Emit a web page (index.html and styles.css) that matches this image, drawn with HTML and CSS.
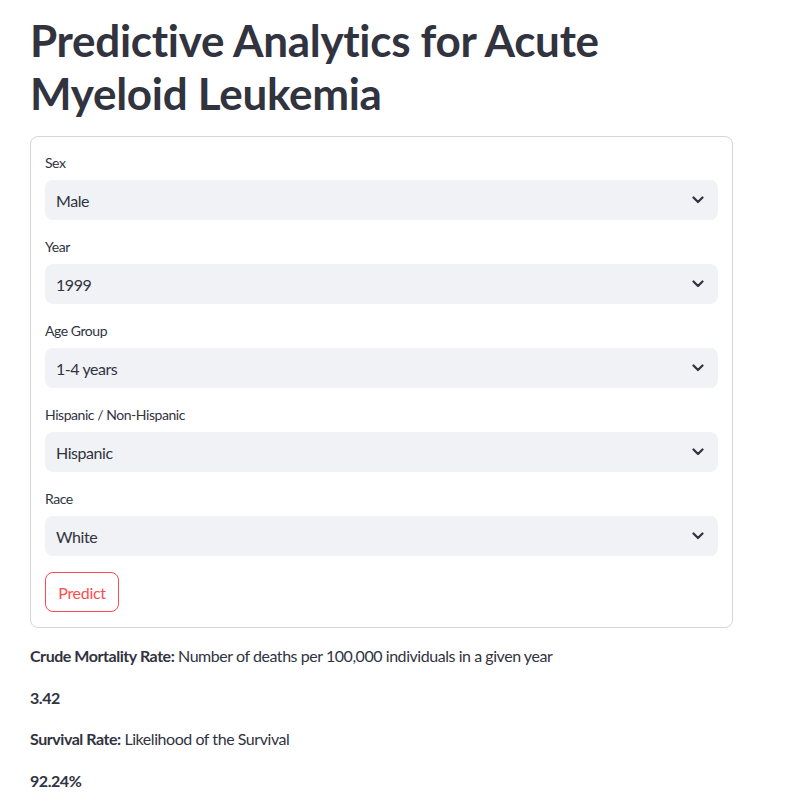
FILE: index.html
```html
<!DOCTYPE html>
<html lang="en">
<head>
<meta charset="utf-8">
<title>Predictive Analytics for Acute Myeloid Leukemia</title>
<link rel="stylesheet" href="styles.css">
</head>
<body>
<main class="main">
  <h1 class="title">Predictive Analytics for Acute Myeloid Leukemia</h1>
  <form class="form">
    <div class="field">
      <label class="label">Sex</label>
      <div class="select"><span>Male</span><svg class="chev" viewBox="0 0 12 8" width="12" height="8"><path d="M1.5 1.5 L6 6 L10.5 1.5" fill="none" stroke="#31333f" stroke-width="2.2" stroke-linecap="round" stroke-linejoin="round"/></svg></div>
    </div>
    <div class="field">
      <label class="label">Year</label>
      <div class="select"><span>1999</span><svg class="chev" viewBox="0 0 12 8" width="12" height="8"><path d="M1.5 1.5 L6 6 L10.5 1.5" fill="none" stroke="#31333f" stroke-width="2.2" stroke-linecap="round" stroke-linejoin="round"/></svg></div>
    </div>
    <div class="field">
      <label class="label">Age Group</label>
      <div class="select"><span>1-4 years</span><svg class="chev" viewBox="0 0 12 8" width="12" height="8"><path d="M1.5 1.5 L6 6 L10.5 1.5" fill="none" stroke="#31333f" stroke-width="2.2" stroke-linecap="round" stroke-linejoin="round"/></svg></div>
    </div>
    <div class="field">
      <label class="label">Hispanic / Non-Hispanic</label>
      <div class="select"><span>Hispanic</span><svg class="chev" viewBox="0 0 12 8" width="12" height="8"><path d="M1.5 1.5 L6 6 L10.5 1.5" fill="none" stroke="#31333f" stroke-width="2.2" stroke-linecap="round" stroke-linejoin="round"/></svg></div>
    </div>
    <div class="field">
      <label class="label">Race</label>
      <div class="select"><span>White</span><svg class="chev" viewBox="0 0 12 8" width="12" height="8"><path d="M1.5 1.5 L6 6 L10.5 1.5" fill="none" stroke="#31333f" stroke-width="2.2" stroke-linecap="round" stroke-linejoin="round"/></svg></div>
    </div>
    <button type="button" class="btn">Predict</button>
  </form>
  <p class="para"><strong>Crude Mortality Rate:</strong> Number of deaths per 100,000 individuals in a given year</p>
  <p class="para"><strong>3.42</strong></p>
  <p class="para"><strong>Survival Rate:</strong> Likelihood of the Survival</p>
  <p class="para"><strong>92.24%</strong></p>
</main>
</body>
</html>
```

FILE: styles.css
```css
* { box-sizing: border-box; }
html, body { margin: 0; padding: 0; background: #ffffff; }
body {
  font-family: "Lato", "Noto Sans", "Liberation Sans", sans-serif;
  color: #31333f;
  font-size: 16px;
  letter-spacing: -0.45px;
}
.main {
  width: 703px;
  margin-left: 30px;
  padding-top: 14px;
  display: flex;
  flex-direction: column;
}
.title {
  margin: 0 0 16px 0;
  font-size: 44px;
  line-height: 53px;
  font-weight: 700;
  letter-spacing: -0.3px;
  color: #31333f;
}
.form {
  border: 1px solid rgba(49, 51, 63, 0.2);
  border-radius: 8px;
  padding: 15px 14px;
  display: flex;
  flex-direction: column;
  gap: 16px;
  margin: 0 0 15px 0;
}
.field { display: flex; flex-direction: column; }
.label {
  font-size: 14px;
  line-height: 22px;
  min-height: 22px;
  margin-bottom: 6px;
  color: #31333f;
}
.select {
  height: 40px;
  background: #f0f2f6;
  border-radius: 8px;
  display: flex;
  align-items: center;
  justify-content: space-between;
  padding: 0 14px 0 11px;
  font-size: 16px;
}
.chev { display: block; }
.btn {
  align-self: flex-start;
  width: 74px;
  height: 40px;
  border: 1px solid #ff4b4b;
  border-radius: 8px;
  background: #ffffff;
  color: #ff4b4b;
  font-family: inherit;
  font-size: 16px;
  letter-spacing: -0.3px;
  padding: 0;
}
.para {
  margin: 0 0 16px 0;
  font-size: 16px;
  line-height: 25.6px;
}
.para strong { font-weight: 700; }
```
